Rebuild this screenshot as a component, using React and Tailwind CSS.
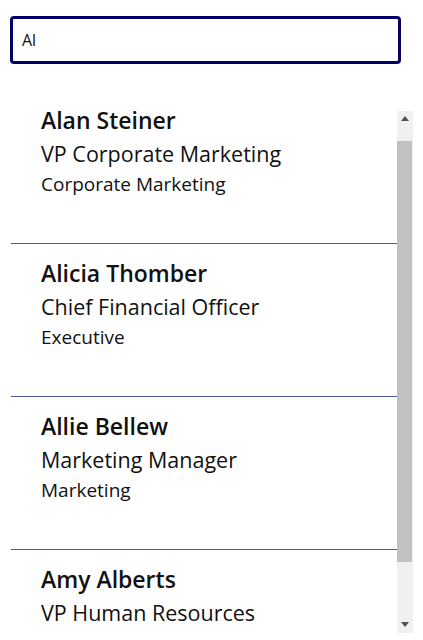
import React from 'react';

const people = [
  { name: 'Alan Steiner', title: 'VP Corporate Marketing', dept: 'Corporate Marketing' },
  { name: 'Alicia Thomber', title: 'Chief Financial Officer', dept: 'Executive' },
  { name: 'Allie Bellew', title: 'Marketing Manager', dept: 'Marketing' },
  { name: 'Amy Alberts', title: 'VP Human Resources', dept: 'Human Resources' },
];

const App = () => {
  return (
    <div className="w-[423px] h-[640px] overflow-hidden bg-white text-black" style={{ fontFamily: '"Open Sans", "Noto Sans", sans-serif' }}>
      {/* Search box */}
      <div className="pt-4 pl-[10px]">
        <div className="w-[391px] h-[48px] border-[3px] border-[#000066] rounded-[4px] flex items-center pl-[9px]">
          <span className="text-[16px] text-[#111]">Al</span>
        </div>
      </div>

      {/* Results list with scrollbar */}
      <div className="flex mt-[27px] h-[542px]">
        <div className="ml-[11px] w-[386px] overflow-hidden">
          {people.map((p) => (
            <div key={p.name} className="h-[153px] border-b border-[#4a58a0] pt-[16px] pl-[30px]">
              <div className="text-[23px] leading-[27px] font-semibold text-[#111]">{p.name}</div>
              <div className="text-[21.5px] leading-[25px] mt-[7px] text-[#111]">{p.title}</div>
              <div className="text-[19px] leading-[25px] mt-[6px] text-[#111]">{p.dept}</div>
            </div>
          ))}
        </div>

        <div className="mt-[20px] w-[16px] h-[522px] bg-[#f0f0f0] flex flex-col">
          <div className="h-[30px] flex justify-center pt-[5px]">
            <svg width="8" height="5" viewBox="0 0 8 5">
              <polygon points="4,0 8,5 0,5" fill="#505050" />
            </svg>
          </div>
          <div className="h-[421px] w-[15px] bg-[#c1c1c1]" />
          <div className="flex-1 flex justify-center items-end pb-[6px]">
            <svg width="8" height="5" viewBox="0 0 8 5">
              <polygon points="0,0 8,0 4,5" fill="#505050" />
            </svg>
          </div>
        </div>
      </div>
    </div>
  );
};

export default App;
